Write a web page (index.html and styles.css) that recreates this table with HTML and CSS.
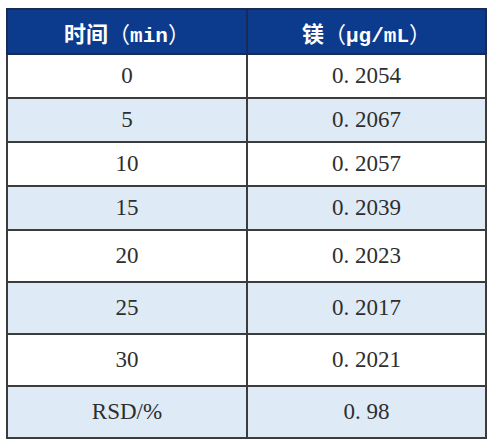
FILE: index.html
```html
<!DOCTYPE html>
<html lang="zh-CN">
<head>
    <meta charset="UTF-8">
    <meta name="viewport" content="width=device-width, initial-scale=1.0">
    <title>镁含量稳定性</title>
    <link rel="stylesheet" href="styles.css">
</head>
<body>
    <main class="wrap">
        <table class="data-table">
            <thead>
                <tr>
                    <th class="col-time">时间<span class="paren">（</span><span class="latin">min</span><span class="paren">）</span></th>
                    <th>镁<span class="paren">（</span><span class="latin">µg/mL</span><span class="paren">）</span></th>
                </tr>
            </thead>
            <tbody>
                <tr><td>0</td><td>0. 2054</td></tr>
                <tr class="alt"><td>5</td><td>0. 2067</td></tr>
                <tr><td>10</td><td>0. 2057</td></tr>
                <tr class="alt"><td>15</td><td>0. 2039</td></tr>
                <tr class="tall"><td>20</td><td>0. 2023</td></tr>
                <tr class="tall alt"><td>25</td><td>0. 2017</td></tr>
                <tr class="tall"><td>30</td><td>0. 2021</td></tr>
                <tr class="tall alt"><td>RSD/%</td><td>0. 98</td></tr>
            </tbody>
        </table>
    </main>
</body>
</html>
```

FILE: styles.css
```css
:root {
    --head-bg: #0c3a8c;
    --row-alt: #deebf7;
    --line: #3c3c3c;
    --text: #2e2e2e;
}

* {
    margin: 0;
    padding: 0;
    box-sizing: border-box;
}

body {
    background: #ffffff;
    font-family: "Liberation Serif", "Noto Sans CJK SC", serif;
    color: var(--text);
}

.wrap {
    padding: 8px 0 0 6px;
}

.data-table {
    width: 481px;
    border-collapse: collapse;
    table-layout: fixed;
}

.data-table th,
.data-table td {
    border: 2px solid var(--line);
    text-align: center;
    vertical-align: middle;
}

.data-table th {
    background: var(--head-bg);
    color: #ffffff;
    height: 45px;
    font-family: "Noto Sans CJK SC", sans-serif;
    font-weight: bold;
    font-size: 22px;
    border-color: #1a2a55;
}

.col-time {
    width: 240px;
}

.data-table .latin {
    font-family: "Liberation Mono", monospace;
    font-size: 21px;
    font-weight: bold;
}

.data-table .paren {
    font-weight: normal;
}

.data-table td {
    height: 44px;
    font-size: 23px;
    background: #ffffff;
}

.data-table tr.alt td {
    background: var(--row-alt);
}

.data-table tr.tall td {
    height: 52px;
}
```
